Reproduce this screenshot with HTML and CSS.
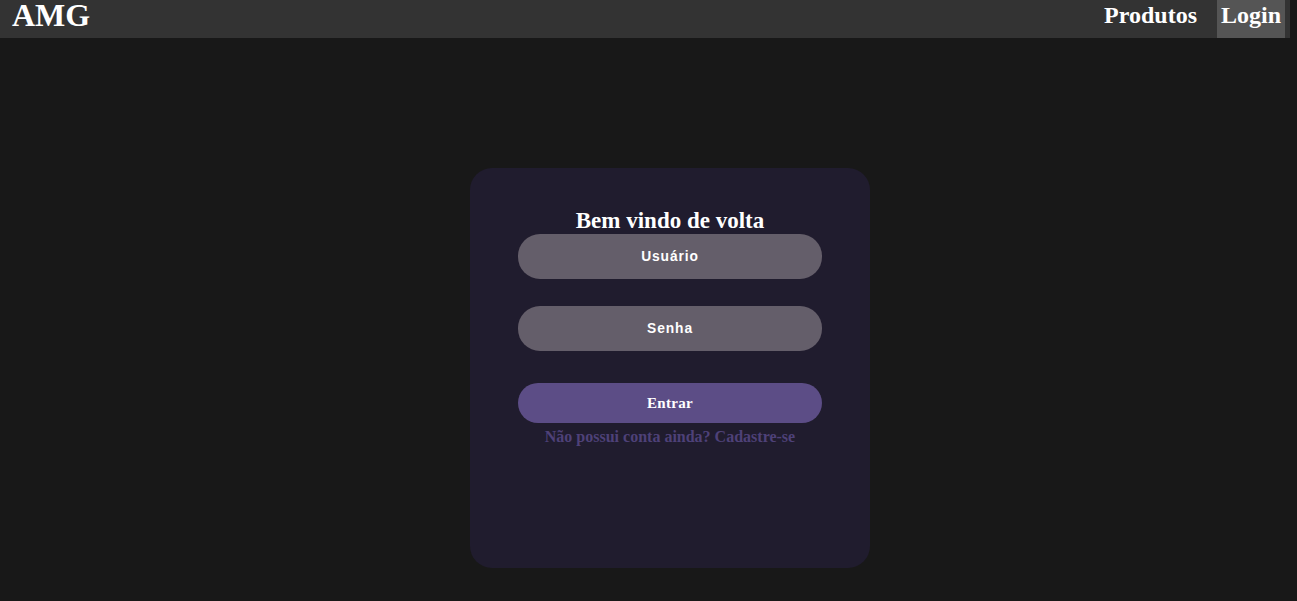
FILE: index.html
```html
<!DOCTYPE html>
<html lang="pt">
<head>
<meta charset="utf-8">
<title>AMG - Login</title>
<link rel="stylesheet" href="styles.css">
</head>
<body>
<header class="navbar">
  <a class="brand" href="#">AMG</a>
  <nav class="nav-links">
    <a class="nav-link" href="#">Produtos</a>
    <a class="nav-link active" href="#">Login</a>
  </nav>
</header>
<main class="page">
  <form class="card">
    <h2 class="card-title">Bem vindo de volta</h2>
    <input class="field" type="text" placeholder="Usuário">
    <input class="field field-second" type="password" placeholder="Senha">
    <button class="submit" type="button">Entrar</button>
    <a class="signup" href="#">Não possui conta ainda? Cadastre-se</a>
  </form>
</main>
</body>
</html>
```

FILE: styles.css
```css
html, body {
  margin: 0;
  padding: 0;
  background: #181818;
  font-family: "Liberation Serif", "Times New Roman", serif;
  color: #fff;
}

.navbar {
  width: calc(100% - 7px);
  height: 38px;
  background: #333333;
  display: flex;
  align-items: stretch;
  justify-content: space-between;
}

.brand {
  color: #fff;
  text-decoration: none;
  font-weight: bold;
  font-size: 32px;
  line-height: 30px;
  padding-left: 12px;
}

.nav-links {
  display: flex;
  align-items: stretch;
  padding-right: 5px;
}

.nav-link {
  color: #fff;
  text-decoration: none;
  font-weight: bold;
  font-size: 24px;
  line-height: 30px;
  padding: 0 4px;
  margin-left: 16px;
}

.nav-link.active {
  background: #555555;
}

.page {
  display: flex;
  justify-content: center;
  padding-top: 130px;
  padding-left: 43px;
}

.card {
  width: 400px;
  height: 400px;
  box-sizing: border-box;
  background: #201c2e;
  border-radius: 22px;
  display: flex;
  flex-direction: column;
  align-items: center;
  padding-top: 40px;
}

.card-title {
  margin: 0;
  font-size: 23px;
  font-weight: bold;
  line-height: 26px;
  color: #fff;
}

.field {
  width: 304px;
  height: 45px;
  box-sizing: border-box;
  border: none;
  border-radius: 22px;
  background: #645e6a;
  text-align: center;
  font-family: "Liberation Sans", Arial, sans-serif;
  font-weight: bold;
  font-size: 13.8px;
  letter-spacing: 0.9px;
  color: #fff;
  outline: none;
}

.field::placeholder {
  color: #fff;
  opacity: 1;
}

.field-second {
  margin-top: 27px;
}

.submit {
  margin-top: 32px;
  width: 304px;
  height: 40px;
  border: none;
  border-radius: 20px;
  background: #5c4d86;
  color: #fff;
  font-family: "Liberation Serif", "Times New Roman", serif;
  font-weight: bold;
  font-size: 15px;
  letter-spacing: 0.3px;
}

.signup {
  margin-top: 5px;
  color: #4e4178;
  text-decoration: none;
  font-weight: bold;
  font-size: 16px;
  line-height: 18px;
}
```
